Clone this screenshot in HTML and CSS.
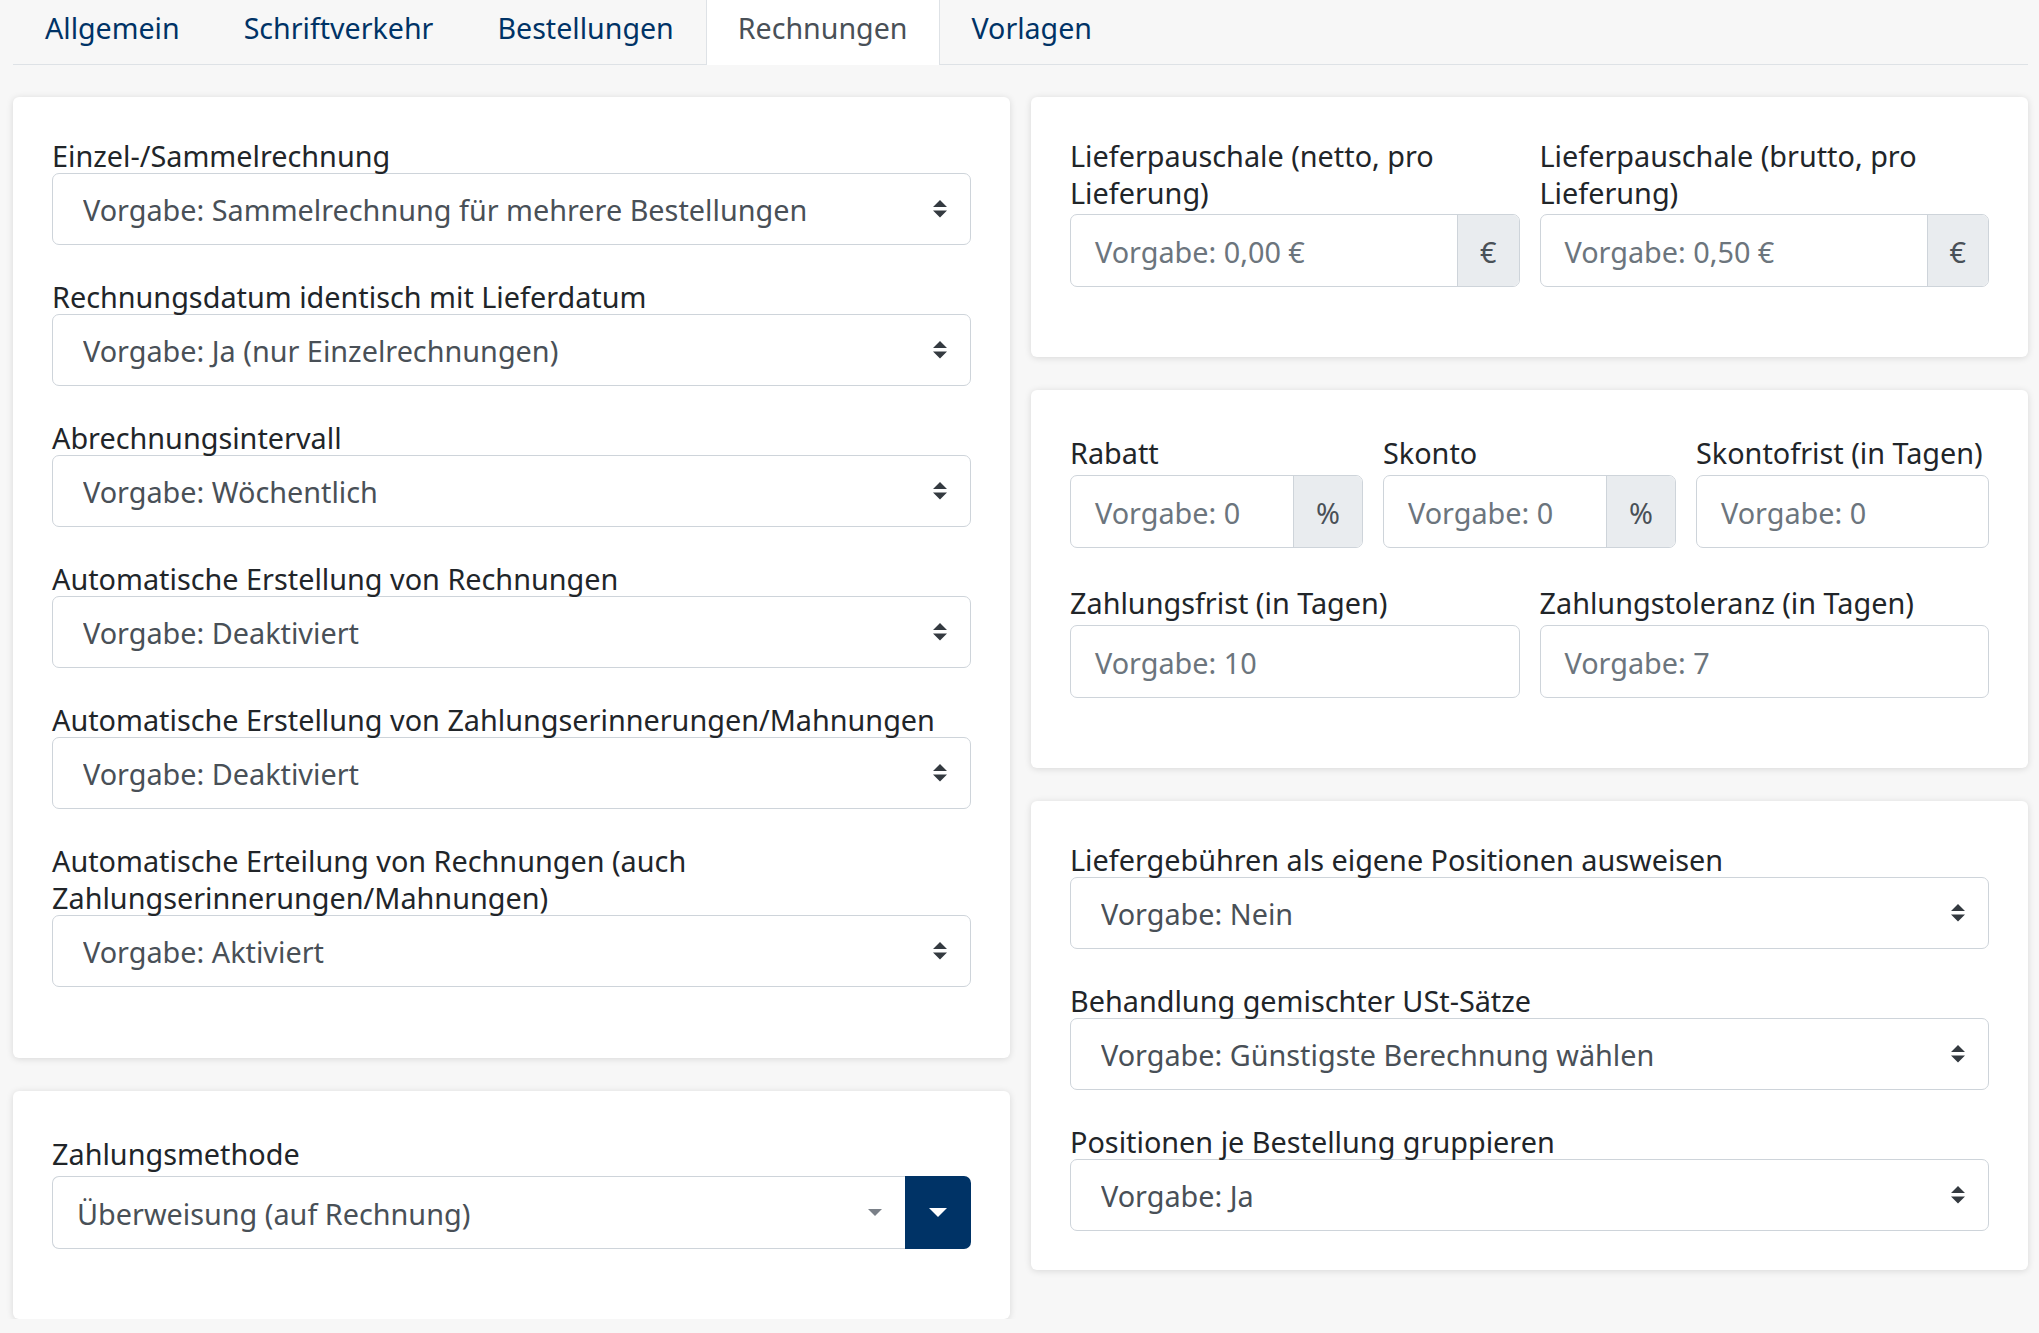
FILE: index.html
```html
<!DOCTYPE html>
<html lang="de">
<head>
<meta charset="utf-8">
<title>Rechnungen</title>
<link rel="stylesheet" href="styles.css">
</head>
<body>
<div class="page">
  <nav class="tabs">
    <a class="tab">Allgemein</a>
    <a class="tab">Schriftverkehr</a>
    <a class="tab">Bestellungen</a>
    <a class="tab active">Rechnungen</a>
    <a class="tab">Vorlagen</a>
  </nav>

  <div class="columns">
    <div class="column">
      <section class="card">
        <div class="group">
          <label class="label">Einzel-/Sammelrechnung</label>
          <div class="select"><span class="select-value">Vorgabe: Sammelrechnung für mehrere Bestellungen</span><svg class="arrows" viewBox="0 0 4 5"><path d="M2 0L0 2h4zm0 5L0 3h4z"/></svg></div>
        </div>
        <div class="group">
          <label class="label">Rechnungsdatum identisch mit Lieferdatum</label>
          <div class="select"><span class="select-value">Vorgabe: Ja (nur Einzelrechnungen)</span><svg class="arrows" viewBox="0 0 4 5"><path d="M2 0L0 2h4zm0 5L0 3h4z"/></svg></div>
        </div>
        <div class="group">
          <label class="label">Abrechnungsintervall</label>
          <div class="select"><span class="select-value">Vorgabe: Wöchentlich</span><svg class="arrows" viewBox="0 0 4 5"><path d="M2 0L0 2h4zm0 5L0 3h4z"/></svg></div>
        </div>
        <div class="group">
          <label class="label">Automatische Erstellung von Rechnungen</label>
          <div class="select"><span class="select-value">Vorgabe: Deaktiviert</span><svg class="arrows" viewBox="0 0 4 5"><path d="M2 0L0 2h4zm0 5L0 3h4z"/></svg></div>
        </div>
        <div class="group">
          <label class="label">Automatische Erstellung von Zahlungserinnerungen/Mahnungen</label>
          <div class="select"><span class="select-value">Vorgabe: Deaktiviert</span><svg class="arrows" viewBox="0 0 4 5"><path d="M2 0L0 2h4zm0 5L0 3h4z"/></svg></div>
        </div>
        <div class="group">
          <label class="label">Automatische Erteilung von Rechnungen (auch Zahlungserinnerungen/Mahnungen)</label>
          <div class="select"><span class="select-value">Vorgabe: Aktiviert</span><svg class="arrows" viewBox="0 0 4 5"><path d="M2 0L0 2h4zm0 5L0 3h4z"/></svg></div>
        </div>
      </section>

      <section class="card">
        <div class="group group-input">
          <label class="label label-offset">Zahlungsmethode</label>
          <div class="combo">
            <div class="combo-box"><span class="combo-value">Überweisung (auf Rechnung)</span><svg class="caret-small" viewBox="0 0 14 7"><path d="M0 0h14L7 7z"/></svg></div>
            <div class="combo-btn"><svg class="caret-white" viewBox="0 0 18 9"><path d="M0 0h18L9 9z"/></svg></div>
          </div>
        </div>
      </section>
    </div>

    <div class="column">
      <section class="card">
        <div class="row2 group-input">
          <div class="field">
            <label class="label label-gap">Lieferpauschale (netto, pro Lieferung)</label>
            <div class="input-group"><span class="input-text">Vorgabe: 0,00 €</span><span class="addon">€</span></div>
          </div>
          <div class="field">
            <label class="label label-gap">Lieferpauschale (brutto, pro Lieferung)</label>
            <div class="input-group"><span class="input-text">Vorgabe: 0,50 €</span><span class="addon">€</span></div>
          </div>
        </div>
      </section>

      <section class="card">
        <div class="row3 group-input">
          <div class="field">
            <label class="label label-offset">Rabatt</label>
            <div class="input-group"><span class="input-text">Vorgabe: 0</span><span class="addon">%</span></div>
          </div>
          <div class="field">
            <label class="label label-offset">Skonto</label>
            <div class="input-group"><span class="input-text">Vorgabe: 0</span><span class="addon">%</span></div>
          </div>
          <div class="field">
            <label class="label label-offset">Skontofrist (in Tagen)</label>
            <div class="input-group"><span class="input-text">Vorgabe: 0</span></div>
          </div>
        </div>
        <div class="row2 group-input">
          <div class="field">
            <label class="label label-offset">Zahlungsfrist (in Tagen)</label>
            <div class="input-group"><span class="input-text">Vorgabe: 10</span></div>
          </div>
          <div class="field">
            <label class="label label-offset">Zahlungstoleranz (in Tagen)</label>
            <div class="input-group"><span class="input-text">Vorgabe: 7</span></div>
          </div>
        </div>
      </section>

      <section class="card card-tight">
        <div class="group">
          <label class="label">Liefergebühren als eigene Positionen ausweisen</label>
          <div class="select"><span class="select-value">Vorgabe: Nein</span><svg class="arrows" viewBox="0 0 4 5"><path d="M2 0L0 2h4zm0 5L0 3h4z"/></svg></div>
        </div>
        <div class="group">
          <label class="label">Behandlung gemischter USt-Sätze</label>
          <div class="select"><span class="select-value">Vorgabe: Günstigste Berechnung wählen</span><svg class="arrows" viewBox="0 0 4 5"><path d="M2 0L0 2h4zm0 5L0 3h4z"/></svg></div>
        </div>
        <div class="group">
          <label class="label">Positionen je Bestellung gruppieren</label>
          <div class="select"><span class="select-value">Vorgabe: Ja</span><svg class="arrows" viewBox="0 0 4 5"><path d="M2 0L0 2h4zm0 5L0 3h4z"/></svg></div>
        </div>
      </section>
    </div>
  </div>
</div>
</body>
</html>
```

FILE: styles.css
```css
* {
  box-sizing: border-box;
}

html,
body {
  margin: 0;
}

body {
  background: #f7f7f7;
  font-family: "Noto Sans", "Open Sans", sans-serif;
  font-size: 28.8px;
  color: #212529;
}

.page {
  padding: 0 11px 0 13px;
}

/* Tabs */
.tabs {
  display: flex;
  height: 65px;
  border-bottom: 1px solid #dee2e6;
}

.tab {
  display: block;
  height: 65px;
  margin-bottom: -1px;
  padding: 0 31px;
  font-size: 28.6px;
  line-height: 56px;
  border-left: 1px solid transparent;
  border-right: 1px solid transparent;
  color: #003366;
  text-decoration: none;
  white-space: nowrap;
}

.tab.active {
  background: #fff;
  border-color: #dee2e6;
  color: #495057;
}

/* Layout */
.columns {
  display: grid;
  grid-template-columns: 1fr 1fr;
  column-gap: 21px;
  align-items: start;
  margin-top: 32px;
}

.column {
  display: flex;
  flex-direction: column;
  gap: 33px;
}

.card {
  background: #fff;
  border-radius: 6px;
  box-shadow: 0 1px 7px rgba(0, 0, 0, 0.13);
  padding: 39px;
}

.group {
  margin-bottom: 32px;
}

.card-tight .group:last-child {
  margin-bottom: 0;
}

.group-input {
  margin-bottom: 31px;
}

.label {
  display: block;
  padding-top: 1px;
  margin-bottom: -1px;
  line-height: 37px;
}

.label-offset {
  padding-top: 5px;
  margin-bottom: 4px;
}

.label-gap {
  margin-bottom: 3px;
}

.row2 {
  display: grid;
  grid-template-columns: 1fr 1fr;
  column-gap: 20px;
}

.row3 {
  display: grid;
  grid-template-columns: 1fr 1fr 1fr;
  column-gap: 20px;
}

.field {
  min-width: 0;
}

/* Select */
.select {
  display: flex;
  align-items: center;
  height: 72px;
  padding: 0 23px 0 30px;
  background: #fff;
  border: 1px solid #ced4da;
  border-radius: 7px;
  color: #495057;
}

.select-value {
  flex: 1;
  padding-top: 2px;
  line-height: 68px;
  white-space: nowrap;
  overflow: hidden;
}

.arrows {
  width: 14px;
  height: 17.5px;
  fill: #343a40;
  flex: none;
}

/* Input group */
.input-group {
  display: flex;
  height: 73px;
  background: #fff;
  border: 1px solid #ced4da;
  border-radius: 7px;
  overflow: hidden;
}

.input-text {
  flex: 1;
  padding-left: 24px;
  padding-top: 2px;
  line-height: 69px;
  color: #6c757d;
  white-space: nowrap;
  overflow: hidden;
}

.addon {
  padding: 2px 22px 0;
  line-height: 69px;
  background: #e9ecef;
  border-left: 1px solid #ced4da;
  color: #495057;
}

/* Combo (Zahlungsmethode) */
.combo {
  display: flex;
  height: 73px;
}

.combo-box {
  flex: 1;
  display: flex;
  align-items: center;
  padding: 0 23px 0 24px;
  background: #fff;
  border: 1px solid #ced4da;
  border-right: 0;
  border-radius: 7px 0 0 7px;
  color: #495057;
}

.combo-value {
  flex: 1;
  padding-top: 2px;
  white-space: nowrap;
}

.caret-small {
  width: 14px;
  height: 7px;
  fill: #7a8088;
}

.combo-btn {
  width: 66px;
  display: flex;
  align-items: center;
  justify-content: center;
  background: #003366;
  border-radius: 0 7px 7px 0;
}

.caret-white {
  width: 18px;
  height: 9px;
  fill: #fff;
}
```
